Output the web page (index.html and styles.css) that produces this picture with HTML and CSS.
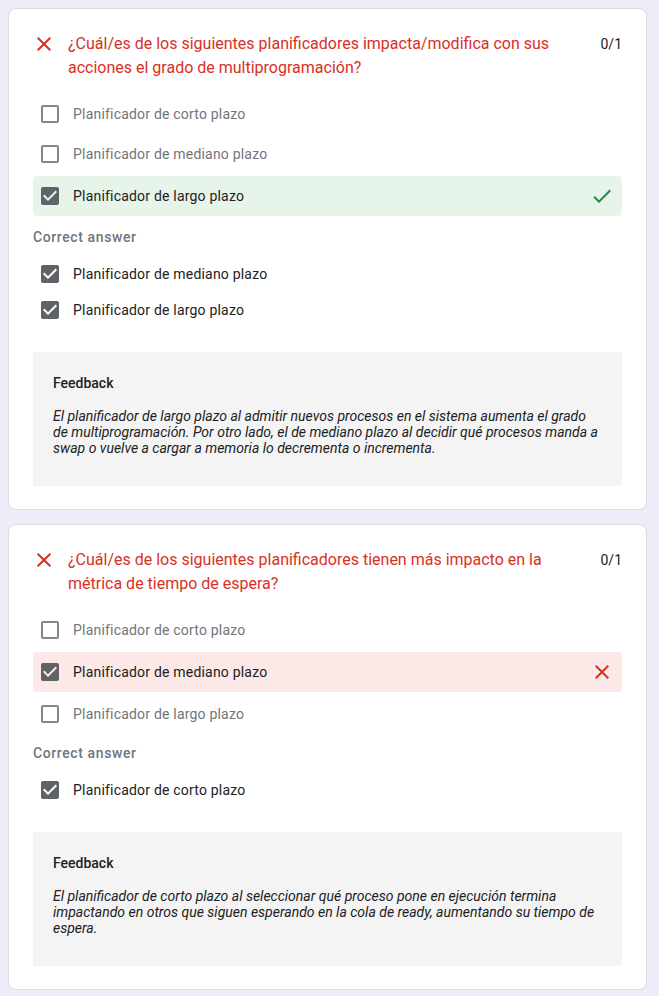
FILE: index.html
```html
<!DOCTYPE html>
<html lang="es">
<head>
<meta charset="utf-8">
<title>Quiz results</title>
<link rel="stylesheet" href="styles.css">
</head>
<body>
<main class="page">

  <section class="card">
    <div class="q-head">
      <svg class="q-icon" viewBox="0 0 24 24" width="24" height="24"><path fill="#d93025" d="M19 6.41L17.59 5 12 10.59 6.41 5 5 6.41 10.59 12 5 17.59 6.41 19 12 13.41 17.59 19 19 17.59 13.41 12z"/></svg>
      <div class="q-title">¿Cuál/es de los siguientes planificadores impacta/modifica con sus acciones el grado de multiprogramación?</div>
      <div class="q-score">0/1</div>
    </div>
    <div class="options">
      <div class="opt">
        <svg class="cb" viewBox="0 0 24 24" width="24" height="24"><path fill="#80868b" d="M19 5v14H5V5h14m0-2H5c-1.1 0-2 .9-2 2v14c0 1.1.9 2 2 2h14c1.1 0 2-.9 2-2V5c0-1.1-.9-2-2-2z"/></svg>
        <span class="opt-text muted">Planificador de corto plazo</span>
      </div>
      <div class="opt">
        <svg class="cb" viewBox="0 0 24 24" width="24" height="24"><path fill="#80868b" d="M19 5v14H5V5h14m0-2H5c-1.1 0-2 .9-2 2v14c0 1.1.9 2 2 2h14c1.1 0 2-.9 2-2V5c0-1.1-.9-2-2-2z"/></svg>
        <span class="opt-text muted">Planificador de mediano plazo</span>
      </div>
      <div class="opt opt-right">
        <svg class="cb" viewBox="0 0 24 24" width="24" height="24"><path fill="#5f6368" d="M19 3H5c-1.11 0-2 .9-2 2v14c0 1.1.89 2 2 2h14c1.11 0 2-.9 2-2V5c0-1.1-.89-2-2-2zm-9 14l-5-5 1.41-1.41L10 14.17l7.59-7.59L19 8l-9 9z"/></svg>
        <span class="opt-text">Planificador de largo plazo</span>
        <svg class="mark" viewBox="0 0 24 24" width="24" height="24"><path fill="#1e8e3e" d="M9 16.17L4.83 12l-1.42 1.41L9 19 21 7l-1.41-1.41z"/></svg>
      </div>
    </div>
    <div class="correct-label">Correct answer</div>
    <div class="correct-list">
      <div class="c-opt">
        <svg class="cb" viewBox="0 0 24 24" width="24" height="24"><path fill="#5f6368" d="M19 3H5c-1.11 0-2 .9-2 2v14c0 1.1.89 2 2 2h14c1.11 0 2-.9 2-2V5c0-1.1-.89-2-2-2zm-9 14l-5-5 1.41-1.41L10 14.17l7.59-7.59L19 8l-9 9z"/></svg>
        <span class="opt-text">Planificador de mediano plazo</span>
      </div>
      <div class="c-opt">
        <svg class="cb" viewBox="0 0 24 24" width="24" height="24"><path fill="#5f6368" d="M19 3H5c-1.11 0-2 .9-2 2v14c0 1.1.89 2 2 2h14c1.11 0 2-.9 2-2V5c0-1.1-.89-2-2-2zm-9 14l-5-5 1.41-1.41L10 14.17l7.59-7.59L19 8l-9 9z"/></svg>
        <span class="opt-text">Planificador de largo plazo</span>
      </div>
    </div>
    <div class="feedback">
      <div class="fb-title">Feedback</div>
      <div class="fb-text">El planificador de largo plazo al admitir nuevos procesos en el sistema aumenta el grado de multiprogramación. Por otro lado, el de mediano plazo al decidir qué procesos manda a swap o vuelve a cargar a memoria lo decrementa o incrementa.</div>
    </div>
  </section>

  <section class="card">
    <div class="q-head">
      <svg class="q-icon" viewBox="0 0 24 24" width="24" height="24"><path fill="#d93025" d="M19 6.41L17.59 5 12 10.59 6.41 5 5 6.41 10.59 12 5 17.59 6.41 19 12 13.41 17.59 19 19 17.59 13.41 12z"/></svg>
      <div class="q-title">¿Cuál/es de los siguientes planificadores tienen más impacto en la métrica de tiempo de espera?</div>
      <div class="q-score">0/1</div>
    </div>
    <div class="options">
      <div class="opt">
        <svg class="cb" viewBox="0 0 24 24" width="24" height="24"><path fill="#80868b" d="M19 5v14H5V5h14m0-2H5c-1.1 0-2 .9-2 2v14c0 1.1.9 2 2 2h14c1.1 0 2-.9 2-2V5c0-1.1-.9-2-2-2z"/></svg>
        <span class="opt-text muted">Planificador de corto plazo</span>
      </div>
      <div class="opt opt-wrong">
        <svg class="cb" viewBox="0 0 24 24" width="24" height="24"><path fill="#5f6368" d="M19 3H5c-1.11 0-2 .9-2 2v14c0 1.1.89 2 2 2h14c1.11 0 2-.9 2-2V5c0-1.1-.89-2-2-2zm-9 14l-5-5 1.41-1.41L10 14.17l7.59-7.59L19 8l-9 9z"/></svg>
        <span class="opt-text">Planificador de mediano plazo</span>
        <svg class="mark" viewBox="0 0 24 24" width="24" height="24"><path fill="#d93025" d="M19 6.41L17.59 5 12 10.59 6.41 5 5 6.41 10.59 12 5 17.59 6.41 19 12 13.41 17.59 19 19 17.59 13.41 12z"/></svg>
      </div>
      <div class="opt">
        <svg class="cb" viewBox="0 0 24 24" width="24" height="24"><path fill="#80868b" d="M19 5v14H5V5h14m0-2H5c-1.1 0-2 .9-2 2v14c0 1.1.9 2 2 2h14c1.1 0 2-.9 2-2V5c0-1.1-.9-2-2-2z"/></svg>
        <span class="opt-text muted">Planificador de largo plazo</span>
      </div>
    </div>
    <div class="correct-label">Correct answer</div>
    <div class="correct-list">
      <div class="c-opt">
        <svg class="cb" viewBox="0 0 24 24" width="24" height="24"><path fill="#5f6368" d="M19 3H5c-1.11 0-2 .9-2 2v14c0 1.1.89 2 2 2h14c1.11 0 2-.9 2-2V5c0-1.1-.89-2-2-2zm-9 14l-5-5 1.41-1.41L10 14.17l7.59-7.59L19 8l-9 9z"/></svg>
        <span class="opt-text">Planificador de corto plazo</span>
      </div>
    </div>
    <div class="feedback">
      <div class="fb-title">Feedback</div>
      <div class="fb-text">El planificador de corto plazo al seleccionar qué proceso pone en ejecución termina impactando en otros que siguen esperando en la cola de ready, aumentando su tiempo de espera.</div>
    </div>
  </section>

</main>
</body>
</html>
```

FILE: styles.css
```css
html, body {
  margin: 0;
  padding: 0;
  background: #f0ebf8;
  overflow: hidden;
}

body {
  font-family: Roboto, "Liberation Sans", Arial, sans-serif;
  color: #202124;
}

.page {
  display: flex;
  flex-direction: column;
  gap: 14px;
  width: 639px;
  padding: 8px 0 0 8px;
}

.card {
  background: #fff;
  border: 1px solid #dadce0;
  border-radius: 8px;
  padding: 23px 24px 23px 24px;
}

.q-head {
  display: flex;
  align-items: flex-start;
}

.q-icon {
  flex: none;
  margin-left: -1px;
  margin-right: 12px;
}

.q-title {
  flex: 1;
  font-size: 16px;
  line-height: 24px;
  color: #d93025;
  padding-right: 24px;
}

.q-score {
  flex: none;
  font-size: 14px;
  line-height: 24px;
  color: #202124;
}

.options {
  margin-top: 14px;
  display: flex;
  flex-direction: column;
}

.opt {
  display: flex;
  align-items: center;
  height: 40px;
  padding: 0 8px 0 5px;
  border-radius: 4px;
}

.opt-right {
  background: #e6f4ea;
  margin: 2px 0;
}

.opt-wrong {
  background: #fce8e6;
  margin: 2px 0;
}

.cb {
  flex: none;
  margin-right: 11px;
}

.opt-text {
  flex: 1;
  font-size: 14px;
  line-height: 20px;
  color: #202124;
  letter-spacing: 0.2px;
}

.opt-text.muted {
  color: #70757a;
}

.mark {
  flex: none;
}

.correct-label {
  margin-top: 9px;
  margin-bottom: 9px;
  font-size: 14px;
  line-height: 20px;
  font-weight: 500;
  color: #70757a;
  letter-spacing: 0.6px;
}

.correct-list {
  display: flex;
  flex-direction: column;
}

.c-opt {
  display: flex;
  align-items: center;
  height: 36px;
  padding-left: 5px;
}

.feedback {
  margin-top: 24px;
  background: #f4f4f4;
  padding: 21px 20px 30px 20px;
}

.fb-title {
  font-size: 14px;
  line-height: 20px;
  font-weight: 500;
  color: #202124;
}

.fb-text {
  margin-top: 15px;
  font-size: 14px;
  line-height: 16px;
  font-style: italic;
  color: #202124;
}
```
